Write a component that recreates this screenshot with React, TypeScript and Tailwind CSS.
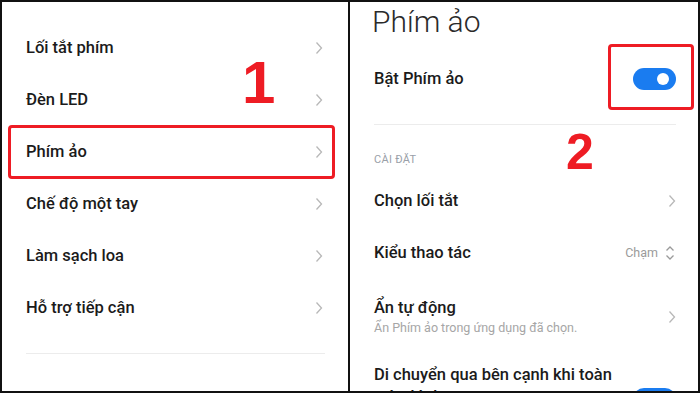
import React from 'react';

const font = { fontFamily: 'Roboto, "Noto Sans", sans-serif' };

function Chevron() {
  return (
    <svg width="8" height="14" viewBox="0 0 8 14" className="shrink-0">
      <polyline points="1.5,1.5 6.5,7 1.5,12.5" fill="none" stroke="#b8b8b8" strokeWidth="1.3" />
    </svg>
  );
}

function UpDown() {
  return (
    <svg width="10" height="16" viewBox="0 0 10 16" className="shrink-0">
      <polyline points="1.5,5.5 5,2 8.5,5.5" fill="none" stroke="#9a9a9a" strokeWidth="1.3" />
      <polyline points="1.5,10.5 5,14 8.5,10.5" fill="none" stroke="#9a9a9a" strokeWidth="1.3" />
    </svg>
  );
}

function Toggle() {
  return (
    <div className="w-[43px] h-[22px] rounded-full bg-[#1a7cf0] flex items-center justify-end pr-[7px]">
      <div className="w-[12px] h-[12px] rounded-full bg-white" />
    </div>
  );
}

const leftItems = ['Lối tắt phím', 'Đèn LED', 'Phím ảo', 'Chế độ một tay', 'Làm sạch loa', 'Hỗ trợ tiếp cận'];

export default function App() {
  return (
    <div className="w-[700px] h-[393px] border-2 border-[#111] bg-white flex overflow-hidden" style={font}>
      {/* left screen */}
      <div className="relative w-[348px] h-full border-r-2 border-[#111] pt-[20px]">
        {leftItems.map((item) => (
          <div key={item} className="relative h-[52px] flex items-center justify-between pl-[24px] pr-[25px]">
            <span className="text-[16.5px] text-[#1b1b1b] font-medium">{item}</span>
            <Chevron />
            {item === 'Phím ảo' && (
              <div className="absolute left-[6px] right-[13px] top-[-1px] bottom-[-1px] border-[3px] border-[#ee1c24] rounded-[4px]" />
            )}
          </div>
        ))}
        <div className="ml-[24px] mr-[23px] mt-[19px] h-px bg-[#ececec]" />
        <div
          className="absolute left-[240px] top-[51px] text-[60px] font-bold text-[#ee1c24] leading-none"
          style={{ fontFamily: '"Liberation Sans", Arial, sans-serif' }}
        >
          1
        </div>
      </div>

      {/* right screen */}
      <div className="relative flex-1 h-full">
        <div className="pl-[22px] h-[40px] flex items-end">
          <span className="text-[30px] font-light text-[#2a2a2a] leading-none mb-[5px]">Phím ảo</span>
        </div>
        <div className="relative h-[74px] flex items-center justify-between pl-[24px] pr-[22px]">
          <span className="text-[16.5px] text-[#1b1b1b] font-medium">Bật Phím ảo</span>
          <Toggle />
          <div className="absolute left-[258px] top-[2px] w-[86px] h-[66px] border-[3px] border-[#ee1c24] rounded-[4px]" />
        </div>
        <div className="ml-[24px] mr-[22px] mt-[8px] h-px bg-[#ececec]" />
        <div className="pl-[24px] h-[66px] flex items-center pt-[4px]">
          <span className="text-[11px] text-[#9aa0a8] tracking-wide">CÀI ĐẶT</span>
        </div>
        <div className="h-[52px] flex items-center justify-between pl-[24px] pr-[22px] -mt-[16px]">
          <span className="text-[16.5px] text-[#1b1b1b] font-medium">Chọn lối tắt</span>
          <Chevron />
        </div>
        <div className="h-[52px] flex items-center justify-between pl-[24px] pr-[22px]">
          <span className="text-[16.5px] text-[#1b1b1b] font-medium">Kiểu thao tác</span>
          <div className="flex items-center gap-[7px] pr-[1px]">
            <span className="text-[12.5px] text-[#9a9a9a]">Chạm</span>
            <UpDown />
          </div>
        </div>
        <div className="h-[68px] pt-[8px] flex items-center justify-between pl-[24px] pr-[22px]">
          <div className="flex flex-col">
            <span className="text-[16.5px] text-[#1b1b1b] font-medium leading-[22px]">Ẩn tự động</span>
            <span className="text-[12.5px] text-[#a6a6a6] leading-[18px]">Ẩn Phím ảo trong ứng dụng đã chọn.</span>
          </div>
          <Chevron />
        </div>
        <div className="relative pl-[24px] pr-[22px] pt-[17px] flex justify-between">
          <span className="text-[16.5px] text-[#1b1b1b] font-medium leading-[22px] w-[240px]">
            Di chuyển qua bên cạnh khi toàn màn hình
          </span>
          <div className="mt-[24px]">
            <Toggle />
          </div>
        </div>
        <div
          className="absolute left-[216px] top-[125px] text-[50px] font-bold text-[#ee1c24] leading-none"
          style={{ fontFamily: '"Liberation Sans", Arial, sans-serif' }}
        >
          2
        </div>
      </div>
    </div>
  );
}
